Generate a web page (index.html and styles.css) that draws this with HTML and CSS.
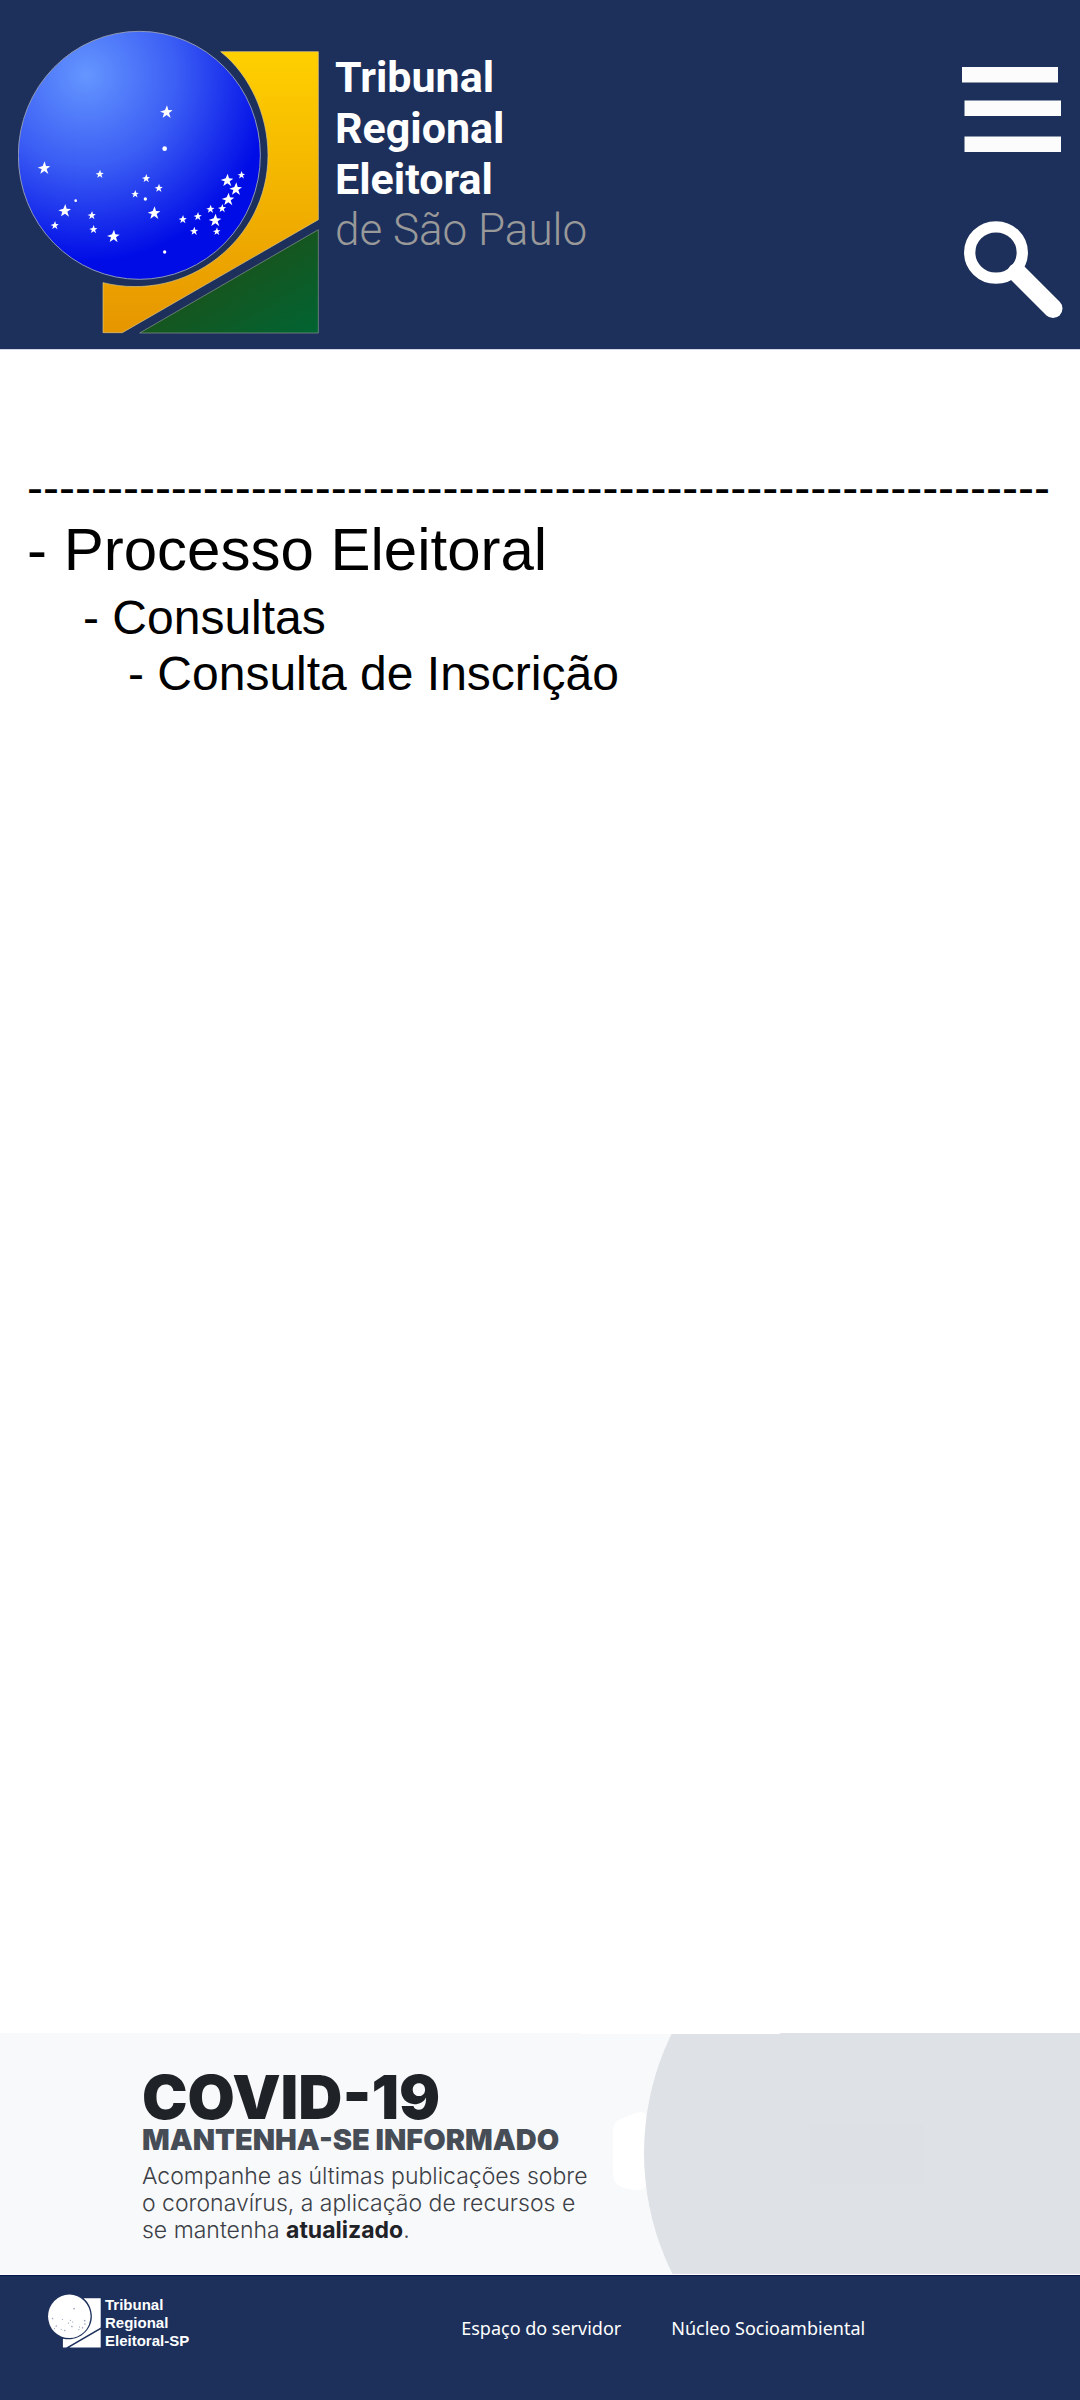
FILE: index.html
```html
<!DOCTYPE html>
<html lang="pt-BR">
<head>
<meta charset="utf-8">
<meta name="viewport" content="width=device-width, initial-scale=1">
<title>Tribunal Regional Eleitoral de São Paulo</title>
<link rel="stylesheet" href="styles.css">
</head>
<body>
<header class="header">
  <a class="brand" href="#">
    <svg class="brand-mark" viewBox="54 90 906 912" aria-hidden="true">
      <defs>
        <radialGradient id="globe" gradientUnits="userSpaceOnUse" cx="258" cy="225" r="560">
          <stop offset="0" stop-color="#6496ff"/>
          <stop offset=".5" stop-color="#3a5cf4"/>
          <stop offset="1" stop-color="#000ce6"/>
        </radialGradient>
        <linearGradient id="gold" x1="0" y1="0" x2="0" y2="1">
          <stop offset="0" stop-color="#ffd000"/>
          <stop offset="1" stop-color="#e69600"/>
        </linearGradient>
        <linearGradient id="leaf" x1="0" y1="0" x2="1" y2="1">
          <stop offset=".4" stop-color="#1a531c"/>
          <stop offset="1" stop-color="#006432"/>
        </linearGradient>
        <path id="star" d="M2-20 6-6 19-5 8 3 13 18 1 9-11 17-7 3-19-1-4-6z"/>
      </defs>
      <path fill="url(#gold)" stroke="#e0c98a" stroke-width="2" d="M662 155H955V659L367 998H309V848C560 910 804 720 804 466 804 345 750 225 662 155z"/>
      <path fill="url(#leaf)" stroke="#8e9a8e" stroke-width="2" d="M955 689V999H419z"/>
      <ellipse cx="418" cy="466" rx="363" ry="372" fill="url(#globe)" stroke="#8d97b8" stroke-width="3"/>
      <g fill="#fff">
        <use href="#star" x="499" y="336"/><use href="#star" x="132" y="504"/>
        <use href="#star" x="194" y="632"/><use href="#star" x="340" y="709"/>
        <use href="#star" x="462" y="639"/><use href="#star" x="681" y="541"/>
        <use href="#star" x="707" y="567"/><use href="#star" x="684" y="598"/>
        <use href="#star" x="645" y="661"/>
        <use href="#star" transform="translate(299 522) scale(.65)"/>
        <use href="#star" transform="translate(438 535) scale(.65)"/>
        <use href="#star" transform="translate(476 564) scale(.65)"/>
        <use href="#star" transform="translate(405 582) scale(.6)"/>
        <use href="#star" transform="translate(275 646) scale(.65)"/>
        <use href="#star" transform="translate(280 688) scale(.65)"/>
        <use href="#star" transform="translate(164 676) scale(.65)"/>
        <use href="#star" transform="translate(548 658) scale(.65)"/>
        <use href="#star" transform="translate(593 649) scale(.65)"/>
        <use href="#star" transform="translate(582 693) scale(.65)"/>
        <use href="#star" transform="translate(631 627) scale(.65)"/>
        <use href="#star" transform="translate(666 625) scale(.65)"/>
        <use href="#star" transform="translate(650 694) scale(.6)"/>
        <use href="#star" transform="translate(724 525) scale(.6)"/>
        <circle cx="494" cy="446" r="7"/><circle cx="436" cy="597" r="5"/>
        <circle cx="227" cy="602" r="4"/><circle cx="494" cy="756" r="5"/>
      </g>
    </svg>
    <span class="brand-name">Tribunal<br>Regional<br>Eleitoral<br><span class="brand-place">de São Paulo</span></span>
  </a>
  <div class="actions">
    <button class="action" type="button" aria-label="Menu">
      <svg width="99" height="85" viewBox="0 0 99 85" fill="#fcfcfc">
        <path d="M0 0h96v15.500H0zM2.500 33.500H99V49H2.500zM2.500 69.500H99V85H2.500z"/>
      </svg>
    </button>
    <button class="action" type="button" aria-label="Buscar">
      <svg width="101" height="98" viewBox="0 0 101 98" fill="none" stroke="#fff">
        <ellipse cx="34" cy="31.500" rx="26.300" ry="25.700" stroke-width="11.300"/>
        <path d="M55 51.500 91 87.500" stroke-width="19" stroke-linecap="round"/>
      </svg>
    </button>
  </div>
</header>

<main class="content">
  <p class="divider">----------------------------------------------------------------</p>
  <nav aria-label="Trilha">
    <h1 class="level-1">- Processo Eleitoral</h1>
    <p class="level-2">- Consultas</p>
    <p class="level-3">- Consulta de Inscrição</p>
  </nav>
</main>

<section class="banner">
  <svg class="banner-art" width="500" height="241" viewBox="580 0 500 241" aria-hidden="true">
    <path fill="#fff" d="M613 98c0-14 12-12 20-17q14-6 14 6v58q0 12-8 12-26 0-26-16z"/>
    <circle cx="915" cy="120" r="271" fill="#dee1e6"/>
    <path fill="#fff" d="M580 0h200v1H580z"/>
    <path fill="#dde0e5" d="M809 90H917q7 0 7 7V145q0 7-7 7H809z"/>
  </svg>
  <div class="banner-text">
    <h2 class="banner-title">COVID-19</h2>
    <h3 class="banner-subtitle">MANTENHA-SE INFORMADO</h3>
    <p class="banner-copy">Acompanhe as últimas publicações sobre<br>o coronavírus, a aplicação de recursos e<br>se mantenha <strong>atualizado</strong>.</p>
  </div>
</section>

<footer class="footer">
  <a class="footer-brand" href="#">
    <svg width="53" height="54" viewBox="54 90 906 912" fill="#fff" aria-hidden="true">
      <path d="M662 155H955V659L367 998H309V848C560 910 804 720 804 466 804 345 750 225 662 155z"/>
      <path d="M955 689V999H419z"/>
      <ellipse cx="418" cy="466" rx="363" ry="372"/>
      <g fill="#8490ad">
        <use href="#star" x="499" y="336"/><use href="#star" x="132" y="504"/>
        <use href="#star" x="194" y="632"/><use href="#star" x="340" y="709"/>
        <use href="#star" x="462" y="639"/><use href="#star" x="681" y="541"/>
        <use href="#star" x="684" y="598"/><use href="#star" x="645" y="661"/>
        <circle cx="299" cy="522" r="9"/><circle cx="438" cy="535" r="9"/>
        <circle cx="476" cy="564" r="9"/><circle cx="405" cy="582" r="9"/>
        <circle cx="280" cy="688" r="9"/><circle cx="164" cy="676" r="9"/>
        <circle cx="593" cy="649" r="9"/><circle cx="582" cy="693" r="9"/>
      </g>
    </svg>
    <span class="footer-name">Tribunal<br>Regional<br>Eleitoral-SP</span>
  </a>
  <nav class="footer-links" aria-label="Rodapé">
    <a href="#">Espaço do servidor</a>
    <a href="#">Núcleo Socioambiental</a>
  </nav>
</footer>
</body>
</html>
```
FILE: styles.css
```css
* { box-sizing: border-box; }

body {
  margin: 0;
  min-height: 100vh;
  display: flex;
  flex-direction: column;
  background: #fff;
  color: #000;
  font-family: "Liberation Sans", Arial, sans-serif;
}

h1, h2, h3, p { margin: 0; font-weight: 400; }
a { color: inherit; text-decoration: none; }
svg { display: block; }

.header {
  display: flex;
  justify-content: space-between;
  padding: 30px 17px 15px 18px;
  border-bottom: 1px solid #d5d5ea;
  background: #1d305b;
  color: #fff;
}

.brand { display: flex; gap: 15px; }
.brand-mark { width: 302px; height: 304px; }

.brand-name {
  padding-top: 22px;
  font: 700 43px/51px Roboto, sans-serif;
}
.brand-place { color: #999; font-size: 44px; font-weight: 300; }

.actions {
  display: flex;
  flex-direction: column;
  gap: 69px;
  padding-top: 37px;
}
.action {
  padding: 0;
  border: 0;
  background: none;
  cursor: pointer;
}

.content { flex: 1; padding: 110px 27px 0; }

.divider { font-size: 48px; line-height: 56px; white-space: nowrap; overflow: hidden; }
.level-1 { font-size: 60px; line-height: 68px; }
.level-2, .level-3 { font-size: 48px; line-height: 56px; }
.level-2 { padding-left: 56px; margin-top: 6px; }
.level-3 { padding-left: 101px; }

.banner {
  position: relative;
  overflow: hidden;
  padding: 36px 142px 30px;
  border-bottom: 1px solid #fff;
  background: #f8f9fb;
}
.banner-art { position: absolute; top: 0; right: 0; }
.banner-text { position: relative; font-family: Inter, sans-serif; }
.banner-title { color: #1f2227; font-size: 61px; line-height: 56px; font-weight: 900; }
.banner-subtitle { color: #474d56; font-size: 29px; line-height: 30px; font-weight: 900; }
.banner-copy { padding-top: 8px; color: #3c4046; font-size: 23px; line-height: 27px; font-weight: 300; }
.banner-copy strong { color: #1f2227; font-weight: 700; }

.footer {
  display: flex;
  align-items: flex-start;
  gap: 272px;
  padding: 18px 48px 50px;
  border-top: 1px solid #04164a;
  background: #1d305b;
  color: #fff;
}
.footer-brand {
  display: flex;
  gap: 4px;
  font-size: 15px;
  line-height: 18px;
  font-weight: 700;
}
.footer-name { padding-top: 2px; }
.footer-links {
  display: flex;
  gap: 50px;
  padding-top: 22px;
  font: 400 18px/24px "Noto Sans", sans-serif;
}
```
